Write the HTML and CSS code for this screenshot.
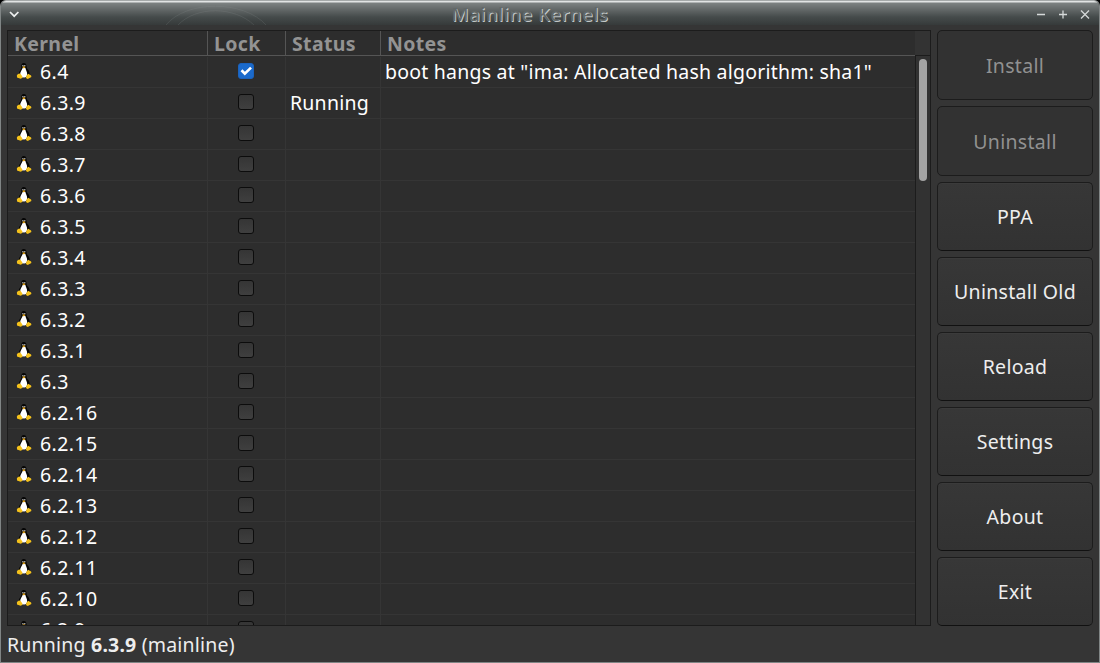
FILE: index.html
```html
<!DOCTYPE html>
<html lang="en">
<head>
<meta charset="utf-8">
<title>Mainline Kernels</title>
<link rel="stylesheet" href="styles.css">
</head>
<body>
<svg class="defs" aria-hidden="true">
  <symbol id="tux" viewBox="0 0 16 16">
    <path fill="#050505" d="M7.800 0C5.800 0 5.200 1.400 5.300 3.200c.1 2-.1 2.600-1.200 4.200C3 9.200 2.300 10.600 2.800 12.600l2 2.200h6.400l2.300-2.400c.5-2-.1-3.900-1.300-5.600C10.800 5.600 10.600 4.800 10.500 3 10.300 1 9.600 0 7.800 0z"/>
    <path fill="#fff" d="M6.600 5c-.3 1.500-2.500 4-2.500 6.400 0 1.900 1.300 3.200 3.600 3.200s3.500-1.400 3.500-3.400c0-2.200-1.400-4.200-1.800-6.200z"/>
    <circle cx="6.900" cy="2.700" r=".7" fill="#ccc"/><circle cx="8.800" cy="2.700" r=".7" fill="#ccc"/>
    <path fill="#e9a716" d="M6.200 4 7.800 3.200l1.800.8-1.800 1.500z"/>
    <path fill="#f5c21b" d="M3 10.400.9 11.900l.1 2.500 3.500 1.300 1.800-.6.1-1.600-2-2.700zM12.300 10.700l-1.800 1.700-.6 2.700 1.800.8 3.700-2-.3-1.500-1.300-.7z"/>
  </symbol>
</svg>
<div class="window">
  <header class="titlebar">
    <svg class="glyph menu" viewBox="0 0 12 12"><path d="M2 4l4.200 4.200L10.400 4"/></svg>
    <svg class="emblem" viewBox="0 0 110 22"><path d="M5 22C25 -3 83 -3 105 22M17 22C35 3 73 3 93 22"/></svg>
    <h1 class="title">Mainline Kernels</h1>
    <div class="controls">
      <svg class="glyph" viewBox="0 0 12 12"><path d="M2 6.500h8"/></svg>
      <svg class="glyph" viewBox="0 0 12 12"><path d="M2 6.500h8M6 2.500v8"/></svg>
      <svg class="glyph" viewBox="0 0 12 12"><path d="M2 2.500l8 8M10 2.500l-8 8"/></svg>
    </div>
  </header>
  <main class="content">
    <section class="list">
      <div class="table">
        <div class="row head"><span>Kernel</span><span>Lock</span><span>Status</span><span>Notes</span></div>
        <div class="row"><span class="k"><svg><use href="#tux"/></svg>6.4</span><span class="l"><i class="box on"><svg viewBox="0 0 16 16"><path d="M3.500 7.300 6.800 10.600 13 4.600"/></svg></i></span><span></span><span class="note">boot hangs at "ima: Allocated hash algorithm: sha1"</span></div>
        <div class="row"><span class="k"><svg><use href="#tux"/></svg>6.3.9</span><span class="l"><i class="box"></i></span><span class="status">Running</span><span></span></div>
        <div class="row"><span class="k"><svg><use href="#tux"/></svg>6.3.8</span><span class="l"><i class="box"></i></span><span></span><span></span></div>
        <div class="row"><span class="k"><svg><use href="#tux"/></svg>6.3.7</span><span class="l"><i class="box"></i></span><span></span><span></span></div>
        <div class="row"><span class="k"><svg><use href="#tux"/></svg>6.3.6</span><span class="l"><i class="box"></i></span><span></span><span></span></div>
        <div class="row"><span class="k"><svg><use href="#tux"/></svg>6.3.5</span><span class="l"><i class="box"></i></span><span></span><span></span></div>
        <div class="row"><span class="k"><svg><use href="#tux"/></svg>6.3.4</span><span class="l"><i class="box"></i></span><span></span><span></span></div>
        <div class="row"><span class="k"><svg><use href="#tux"/></svg>6.3.3</span><span class="l"><i class="box"></i></span><span></span><span></span></div>
        <div class="row"><span class="k"><svg><use href="#tux"/></svg>6.3.2</span><span class="l"><i class="box"></i></span><span></span><span></span></div>
        <div class="row"><span class="k"><svg><use href="#tux"/></svg>6.3.1</span><span class="l"><i class="box"></i></span><span></span><span></span></div>
        <div class="row"><span class="k"><svg><use href="#tux"/></svg>6.3</span><span class="l"><i class="box"></i></span><span></span><span></span></div>
        <div class="row"><span class="k"><svg><use href="#tux"/></svg>6.2.16</span><span class="l"><i class="box"></i></span><span></span><span></span></div>
        <div class="row"><span class="k"><svg><use href="#tux"/></svg>6.2.15</span><span class="l"><i class="box"></i></span><span></span><span></span></div>
        <div class="row"><span class="k"><svg><use href="#tux"/></svg>6.2.14</span><span class="l"><i class="box"></i></span><span></span><span></span></div>
        <div class="row"><span class="k"><svg><use href="#tux"/></svg>6.2.13</span><span class="l"><i class="box"></i></span><span></span><span></span></div>
        <div class="row"><span class="k"><svg><use href="#tux"/></svg>6.2.12</span><span class="l"><i class="box"></i></span><span></span><span></span></div>
        <div class="row"><span class="k"><svg><use href="#tux"/></svg>6.2.11</span><span class="l"><i class="box"></i></span><span></span><span></span></div>
        <div class="row"><span class="k"><svg><use href="#tux"/></svg>6.2.10</span><span class="l"><i class="box"></i></span><span></span><span></span></div>
        <div class="row"><span class="k"><svg><use href="#tux"/></svg>6.2.9</span><span class="l"><i class="box"></i></span><span></span><span></span></div>
      </div>
      <div class="scroll"><div class="corner"></div><div class="track"><div class="thumb"></div></div></div>
    </section>
    <nav class="actions">
      <button class="btn tall" disabled>Install</button>
      <button class="btn tall" disabled>Uninstall</button>
      <button class="btn">PPA</button>
      <button class="btn">Uninstall Old</button>
      <button class="btn">Reload</button>
      <button class="btn">Settings</button>
      <button class="btn">About</button>
      <button class="btn">Exit</button>
    </nav>
  </main>
  <footer class="statusbar">Running <b>6.3.9</b> (mainline)</footer>
</div>
</body>
</html>
```
FILE: styles.css
```css
* { box-sizing: border-box; }
body { margin: 0; background: #000; font: 19.5px/30px "Noto Sans", "Open Sans", sans-serif; color: #fff; }
.defs { display: block; width: 0; height: 0; }
.window { width: 1100px; height: 663px; display: flex; flex-direction: column; overflow: hidden; background: #353535; border: 1px solid #808585; border-top-color: #a5a9a9; border-radius: 6px 6px 0 0; }
.titlebar { height: 24px; flex: none; position: relative; display: flex; align-items: center; justify-content: space-between; padding: 2px 8px 0 7px; background: linear-gradient(#e2e4e4 0 1px, #7d8282 2px, #656a6a 8px, #454b4b 16px, #363a3a 24px); }
.glyph { width: 12px; height: 12px; display: block; fill: none; stroke: #d5d9d9; stroke-width: 1.3; }
.menu { stroke: #eceeee; stroke-width: 1.7; }
.emblem { position: absolute; left: 160px; top: 2px; width: 110px; height: 22px; fill: none; stroke: #8b9292; stroke-opacity: .2; }
.title { position: absolute; left: 0; right: 40px; top: 0; margin: 0; text-align: center; font-size: 18.500px; line-height: 26px; letter-spacing: .58px; font-weight: 500; color: #626868; text-shadow: 1px 1px 0 #c3c8c8; }
.controls { display: flex; gap: 10px; }
.content { height: 596px; flex: none; margin: 5px 6px 0; display: flex; gap: 6px; }
.list { width: 924px; display: flex; border: 1px solid #1c1c1c; background: #2d2d2d; overflow: hidden; }
.table { width: 907px; height: 594px; overflow: hidden; flex: none; }
.row { display: grid; grid-template-columns: 200px 78px 95px 534px; grid-template-rows: 100%; height: 31px; border-bottom: 1px solid #353535; line-height: 29px; }
.head + .row { height: 32px; padding-top: 1px; }
.row > span { border-right: 1px solid #353535; white-space: nowrap; }
.row > span:last-child { border-right: 0; }
.head { height: 25px; border-bottom-color: #555; color: #939393; font-weight: 700; line-height: 25px; letter-spacing: .35px; }
.head > span { border-right-color: #555; padding-left: 6px; }
.k { display: flex; align-items: center; gap: 8px; padding: 0 0 1px 8px; letter-spacing: .4px; }
.k svg { width: 16px; height: 16px; flex: none; margin-top: -1px; }
.l { display: flex; align-items: center; justify-content: center; padding: 0 1px 2px 0; }
.box { width: 16px; height: 16px; border: 1px solid #0c0c0c; border-radius: 3px; background: linear-gradient(#353535, #3f3f3f); }
.on { background: #1b6acb; border-color: #1b62bc; }
.on svg { display: block; margin: -1px; width: 16px; height: 16px; fill: none; stroke: #fff; stroke-width: 2.700; }
.status, .note { padding-left: 4px; letter-spacing: .22px; }
.scroll { width: 15px; display: flex; flex-direction: column; }
.corner { height: 24px; background: #333; }
.track { flex: 1; border-left: 1px solid #1c1c1c; border-top: 1px solid #1c1c1c; background: #323232; padding: 3px; }
.thumb { width: 8px; height: 122px; border-radius: 4px; background: #a4a4a4; }
.actions { width: 156px; display: flex; flex-direction: column; gap: 6px; }
.btn { height: 69px; flex: none; padding: 0; border: 1px solid #1c1c1c; border-bottom-color: #111; border-radius: 5px; background: linear-gradient(#373737, #323232); box-shadow: inset 0 1px #3b3b3b; font: inherit; letter-spacing: .3px; color: #eee; }
.tall { height: 70px; padding-top: 2px; }
.btn:disabled { color: #919191; background: #323232; box-shadow: none; border-bottom-color: #1c1c1c; }
.statusbar { padding-left: 6px; line-height: 38px; letter-spacing: .2px; color: #eee; white-space: nowrap; }
```
